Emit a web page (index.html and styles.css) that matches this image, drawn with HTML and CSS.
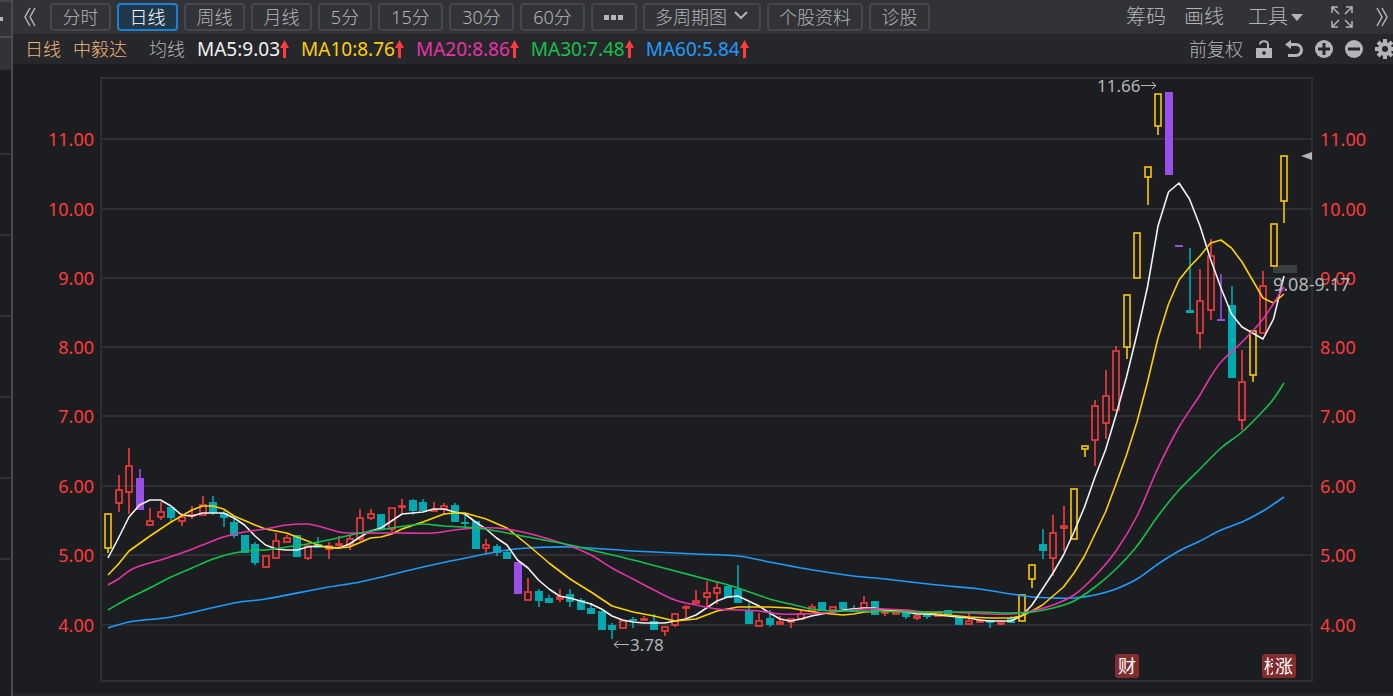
FILE: index.html
```html
<!DOCTYPE html>
<html lang="zh-CN">
<head>
    <meta charset="UTF-8">
    <meta name="viewport" content="width=device-width, initial-scale=1.0">
    <title>中毅达 日线</title>
    <link rel="stylesheet" href="styles.css">
</head>
<body>
    <aside class="side">
        <div class="side-head"><span class="side-dot"></span></div>
        <div class="side-sub"></div>
        <div class="side-row side-first"></div>
        <div class="side-row"></div>
        <div class="side-row"></div>
        <div class="side-row"></div>
        <div class="side-row"></div>
        <div class="side-row"></div>
    </aside>
    <main class="main">
        <nav class="toolbar">
            <button class="icon-btn" type="button" aria-label="向左">
                <svg width="14" height="20" viewBox="0 0 14 20"><path d="M7 1L2 10l5 9M12 1L7 10l5 9"/></svg>
            </button>
            <div class="tabs">
                <button class="tab" type="button">分时</button>
                <button class="tab active" type="button">日线</button>
                <button class="tab" type="button">周线</button>
                <button class="tab" type="button">月线</button>
                <button class="tab tab-short" type="button">5分</button>
                <button class="tab tab-long" type="button">15分</button>
                <button class="tab tab-long" type="button">30分</button>
                <button class="tab tab-long" type="button">60分</button>
                <button class="tab tab-more" type="button" aria-label="更多">
                    <svg width="20" height="5" viewBox="0 0 20 5"><path class="solid" d="M0 0h5v5H0zM7 0h5v5H7zM14 0h5v5h-5z"/></svg>
                </button>
                <button class="tab" type="button">多周期图
                    <svg class="chevron" width="14" height="8" viewBox="0 0 14 8"><path d="M1 1l6 6 6-6"/></svg>
                </button>
                <button class="tab" type="button">个股资料</button>
                <button class="tab" type="button">诊股</button>
            </div>
            <div class="tools">
                <button class="tool" type="button">筹码</button>
                <button class="tool" type="button">画线</button>
                <button class="tool tool-menu" type="button">工具<svg width="12" height="7" viewBox="0 0 12 7"><path class="solid" d="M0 0h12L6 7z"/></svg></button>
                <button class="icon-btn full" type="button" aria-label="全屏">
                    <svg width="22" height="22" viewBox="0 0 22 22"><path d="M1 7V1h6M1 1l7 7M15 1h6v6M21 1l-7 7M1 15v6h6M1 21l7-7M21 15v6h-6M21 21l-7-7"/></svg>
                </button>
                <button class="icon-btn next" type="button" aria-label="向右">
                    <svg width="14" height="20" viewBox="0 0 14 20"><path d="M2 1l5 9-5 9M7 1l5 9-5 9"/></svg>
                </button>
            </div>
        </nav>
        <div class="infobar">
            <span class="stock">日线</span>
            <span class="stock">中毅达</span>
            <span class="avg">均线</span>
            <div class="ma-list">
                <span class="ma ma5">MA5:9.03<svg width="9" height="18" viewBox="0 0 9 18"><path d="M4.500 0L9 8H6v10H3V8H0z"/></svg></span>
                <span class="ma ma10">MA10:8.76<svg width="9" height="18" viewBox="0 0 9 18"><path d="M4.500 0L9 8H6v10H3V8H0z"/></svg></span>
                <span class="ma ma20">MA20:8.86<svg width="9" height="18" viewBox="0 0 9 18"><path d="M4.500 0L9 8H6v10H3V8H0z"/></svg></span>
                <span class="ma ma30">MA30:7.48<svg width="9" height="18" viewBox="0 0 9 18"><path d="M4.500 0L9 8H6v10H3V8H0z"/></svg></span>
                <span class="ma ma60">MA60:5.84<svg width="9" height="18" viewBox="0 0 9 18"><path d="M4.500 0L9 8H6v10H3V8H0z"/></svg></span>
            </div>
            <div class="actions">
                <button class="adjust" type="button">前复权</button>
                <button class="icon-btn" type="button" aria-label="解锁">
                    <svg width="18" height="18" viewBox="0 0 18 18"><path d="M5 4.500C5 0 13 0 13 4.500V9"/><path class="solid" fill-rule="evenodd" d="M1 8h16v10H1zM9 11.200a1.800 1.800 0 1 0 .01 0z"/></svg>
                </button>
                <button class="icon-btn" type="button" aria-label="撤销">
                    <svg width="18" height="18" viewBox="0 0 18 18"><path class="bold" d="M4 4.500h7a5.500 5.500 0 0 1 0 11H3"/><path class="solid" d="M0 4.500L6 0v9z"/></svg>
                </button>
                <button class="icon-btn" type="button" aria-label="放大">
                    <svg width="18" height="18" viewBox="0 0 18 18"><circle class="solid" cx="9" cy="9" r="9"/><path class="cut" d="M9 3v12M3 9h12"/></svg>
                </button>
                <button class="icon-btn" type="button" aria-label="缩小">
                    <svg width="18" height="18" viewBox="0 0 18 18"><circle class="solid" cx="9" cy="9" r="9"/><path class="cut" d="M3 9h12"/></svg>
                </button>
                <button class="icon-btn" type="button" aria-label="设置">
                    <svg width="20" height="20" viewBox="0 0 20 20"><path class="teeth" d="M10 0v20M0 10h20M3 3l14 14M17 3L3 17"/><circle class="solid" cx="10" cy="10" r="7"/><circle class="hole" cx="10" cy="10" r="3"/></svg>
                </button>
            </div>
        </div>
        <svg class="chart" id="chart" viewBox="13 64 1380 629" role="img" aria-label="中毅达日线K线图"></svg>
        <div class="footer-line"></div>
    </main>
    <script src="chart.js"></script>
</body>
</html>
```
FILE: styles.css
```css
* {
    box-sizing: border-box;
}
body {
    margin: 0;
    display: flex;
    min-height: 100vh;
    background-color: #1c1d21;
    color: #b4b5b8;
    font-family: "Noto Sans", "Noto Sans CJK SC", sans-serif;
    font-size: 18px;
    overflow-x: hidden;
}
button {
    background: none;
    border: none;
    padding: 0;
    color: inherit;
    font-family: inherit;
    font-size: 18px;
    font-weight: 300;
    line-height: 24px;
    white-space: nowrap;
    cursor: pointer;
}
svg {
    flex: none;
}

/* left strip */
.side {
    flex: none;
    width: 13px;
    border-right: 2px solid #4b4c50;
}
.side-head {
    display: flex;
    align-items: center;
    height: 38px;
    background-color: #323337;
    border-top: 2px solid #45464a;
    border-bottom: 2px solid #4b4c50;
}
.side-dot {
    width: 3px;
    height: 4px;
    background-color: #b4b5b8;
}
.side-sub {
    height: 32px;
    background-color: #323337;
}
.side-row {
    height: 81px;
    margin-right: 1px;
    border-bottom: 2px solid #323337;
}
.side-first {
    height: 85px;
}

.main {
    flex: 1;
    min-width: 0;
}

/* toolbar */
.toolbar {
    display: flex;
    align-items: center;
    height: 34px;
    padding-left: 10px;
    background-color: #323337;
}
.icon-btn {
    display: flex;
    align-items: center;
}
.icon-btn path,
.chevron path {
    fill: none;
    stroke: #b4b5b8;
    stroke-width: 2;
}
.toolbar .icon-btn path {
    stroke-width: 1.5;
}
svg .solid,
.icon-btn path.solid {
    fill: #b4b5b8;
    stroke: none;
}
.tabs {
    display: flex;
    gap: 6px;
    margin-left: 13px;
}
.tab {
    display: flex;
    align-items: center;
    justify-content: center;
    min-width: 61px;
    height: 28px;
    padding: 0 10px;
    border: 2px solid #46474b;
    border-radius: 4px;
}
.tab.active {
    background-color: #20384c;
    border-color: #1c82cf;
    color: #fff;
}
.tab-short {
    min-width: 54px;
}
.tab-long {
    min-width: 65px;
}
.tab-more {
    min-width: 46px;
}
.chevron {
    margin: 0 1px 4px 7px;
}
.tools {
    display: flex;
    align-items: center;
    gap: 18px;
    margin-left: auto;
    padding-right: 4px;
}
.tool {
    font-size: 20px;
}
.tool-menu {
    display: flex;
    align-items: center;
    gap: 3px;
    margin-left: 6px;
}
.full {
    margin-left: 10px;
}
.next {
    margin-left: 4px;
}

/* info bar */
.infobar {
    display: flex;
    align-items: center;
    height: 30px;
    padding-left: 12px;
    background-color: #26272b;
    line-height: 24px;
    white-space: nowrap;
}
.stock {
    margin-right: 12px;
    color: #f0b878;
    font-weight: 300;
}
.avg {
    margin-left: 10px;
    font-weight: 300;
}
.ma-list {
    display: flex;
    gap: 12px;
    margin-left: 12px;
    font-size: 19px;
}
.ma {
    display: flex;
    align-items: center;
}
.ma path {
    fill: #ff3b3b;
}
.ma5 {
    color: #f2f2f2;
}
.ma10 {
    color: #ffd000;
}
.ma20 {
    color: #e733a8;
}
.ma30 {
    color: #12c24c;
}
.ma60 {
    color: #1e9bff;
}
.actions {
    display: flex;
    align-items: center;
    gap: 12px;
    margin-left: auto;
    margin-right: -2px;
}
.icon-btn path.bold {
    stroke-width: 3;
}
.icon-btn path.cut {
    stroke: #26272b;
    stroke-width: 3;
}
.icon-btn path.teeth {
    stroke-width: 4;
}
.hole {
    fill: #26272b;
}

/* chart */
.chart {
    display: block;
    width: 100%;
    height: auto;
}
.footer-line {
    height: 3px;
    background-color: #26272b;
}
.grid {
    fill: none;
    stroke: #2e2f33;
    stroke-width: 2;
    shape-rendering: crispEdges;
}
.axis {
    fill: #ff3b3b;
    font-size: 18px;
}
.axis-left {
    text-anchor: end;
}
.candle {
    stroke-width: 1.6;
}
.up {
    fill: none;
    stroke: #fa3c3c;
}
.limit {
    fill: none;
    stroke: #fbc800;
}
.down {
    fill: #00a8b0;
    stroke: #00a8b0;
}
.drop {
    fill: #9b4fe8;
    stroke: #9b4fe8;
}
.full-body {
    stroke: none;
}
.line {
    fill: none;
    stroke: currentColor;
    stroke-width: 1.6;
    stroke-linejoin: round;
}
.note {
    fill: #b4b5b8;
    font-size: 17px;
}
.range {
    fill: #b4b5b8;
    font-size: 18px;
}
.arrow {
    fill: none;
    stroke: #b4b5b8;
}
.gap {
    fill: #3d3e43;
}
.badge {
    fill: #842b2d;
}
.badge-text {
    fill: #fff;
    font-size: 18px;
}
```
FILE: chart.js
```js
const chart = document.getElementById('chart');
const START = 108;
const STEP = 10.5;

// type, high, body top, body bottom, low
const candles = [
    ['limit', 513, 513, 548, 553], ['up', 475, 489, 503, 512], ['up', 448, 465, 492, 514], ['drop', 469, 478, 510, 510],
    ['up', 508, 520, 525, 525], ['up', 502, 511, 517, 520], ['down', 507, 507, 518, 521], ['up', 513, 516, 521, 526],
    ['up', 506, 514, 516, 519], ['up', 496, 504, 515, 515], ['down', 496, 502, 513, 515], ['down', 511, 513, 518, 527],
    ['down', 518, 522, 536, 538], ['down', 535, 535, 553, 553], ['down', 542, 544, 563, 565], ['up', 555, 555, 567, 567],
    ['up', 533, 540, 558, 558], ['up', 535, 537, 542, 542], ['down', 535, 535, 557, 557], ['up', 545, 545, 558, 560],
    ['down', 537, 544, 548, 548], ['up', 542, 545, 549, 559], ['up', 536, 543, 545, 547], ['up', 536, 538, 545, 550],
    ['up', 509, 517, 539, 541], ['up', 509, 513, 518, 520], ['down', 514, 514, 530, 530], ['up', 507, 507, 529, 532],
    ['up', 499, 505, 506, 514], ['down', 499, 500, 511, 515], ['down', 499, 502, 511, 511], ['up', 502, 509, 510, 510],
    ['up', 503, 505, 509, 514], ['down', 503, 505, 522, 522], ['down', 514, 522, 523, 527], ['down', 521, 521, 549, 549],
    ['up', 539, 544, 548, 554], ['down', 544, 546, 553, 556], ['down', 550, 552, 559, 559], ['drop', 562, 562, 594, 594],
    ['up', 578, 591, 600, 600], ['down', 589, 591, 601, 607], ['down', 595, 598, 603, 603], ['up', 589, 596, 599, 602],
    ['down', 589, 594, 602, 607], ['down', 598, 600, 610, 610], ['down', 603, 608, 614, 614], ['down', 611, 611, 630, 630],
    ['down', 623, 625, 630, 639], ['up', 620, 620, 628, 628], ['down', 617, 619, 620, 628], ['up', 616, 618, 620, 620],
    ['down', 614, 621, 630, 630], ['up', 626, 626, 631, 636], ['up', 613, 613, 625, 627], ['up', 605, 606, 608, 619],
    ['up', 590, 600, 603, 603], ['up', 581, 592, 597, 608], ['up', 582, 587, 593, 604], ['down', 586, 586, 598, 598],
    ['down', 565, 589, 603, 603], ['down', 603, 611, 624, 624], ['up', 613, 620, 626, 626], ['down', 610, 618, 625, 627],
    ['up', 616, 621, 624, 624], ['up', 618, 618, 622, 628], ['up', 609, 613, 619, 619], ['up', 604, 606, 611, 611],
    ['down', 602, 602, 611, 611], ['up', 606, 606, 610, 610], ['down', 602, 602, 609, 609], ['down', 605, 608, 612, 612],
    ['up', 596, 602, 608, 608], ['down', 601, 601, 615, 615], ['up', 611, 611, 612, 616], ['up', 611, 611, 614, 614],
    ['down', 612, 612, 617, 619], ['up', 615, 615, 618, 620], ['down', 614, 614, 617, 619], ['up', 611, 611, 616, 616],
    ['down', 610, 610, 616, 616], ['down', 616, 616, 625, 625], ['up', 613, 620, 624, 624], ['up', 619, 620, 621, 621],
    ['down', 620, 620, 623, 628], ['up', 621, 622, 623, 625], ['down', 616, 618, 623, 623], ['limit', 594, 594, 621, 621],
    ['limit', 564, 564, 579, 588], ['down', 529, 544, 551, 559], ['up', 515, 532, 558, 576], ['up', 506, 525, 528, 551],
    ['limit', 488, 488, 539, 539], ['limit', 445, 445, 449, 457], ['up', 400, 405, 440, 466], ['up', 370, 395, 423, 439],
    ['up', 346, 350, 410, 410], ['limit', 294, 294, 347, 359], ['limit', 232, 232, 278, 278], ['limit', 166, 166, 177, 205],
    ['limit', 93, 93, 126, 135], ['drop', 92, 92, 175, 175], ['drop', 245, 245, 247, 247], ['down', 248, 310, 313, 313],
    ['up', 269, 300, 333, 349], ['up', 239, 255, 310, 320], ['drop', 274, 319, 321, 321], ['down', 286, 305, 378, 378],
    ['up', 350, 381, 420, 430], ['limit', 330, 330, 375, 382], ['up', 271, 285, 333, 333], ['limit', 223, 223, 266, 266],
    ['limit', 155, 155, 201, 223]
];

// [candle index, y]
const ma5 = [558, 538, 517, 505, 500, 500, 506, 515, 516, 513, 513, 513, 518, 525, 536, 545, 549, 550, 550, 547,
    546, 547, 548, 544, 537, 531, 528, 521, 514, 513, 512, 509, 509, 512, 514, 522, 529, 538, 545, 560,
    568, 580, 589, 596, 598, 601, 604, 609, 616, 620, 622, 623, 623, 623, 621, 619, 615, 608, 601, 597,
    596, 601, 606, 613, 619, 621, 619, 616, 614, 612, 610, 609, 608, 608, 610, 611, 612, 614, 614, 615,
    616, 617, 618, 620, 621, 621, 621, 616, 605, 589, 573, 555, 532, 507, 477, 450, 415, 377, 334, 287,
    226, 192, 183, 199, 226, 259, 288, 314, 327, 333, 339, 319, 276].map((y, i) => [i, y]);
const ma10 = [[0, 575], [1, 564], [2, 551], [4, 536], [6, 522], [8, 510], [9, 506], [10, 506], [11, 509], [12, 516],
    [14, 525], [15, 529], [17, 533], [19, 541], [20, 545], [21, 548], [22, 548], [23, 547], [25, 538], [26, 537],
    [27, 534], [28, 529], [30, 522], [32, 514], [33, 513], [34, 513], [35, 516], [36, 519], [38, 528], [40, 545],
    [42, 563], [44, 579], [46, 592], [48, 606], [50, 612], [52, 616], [54, 621], [56, 619], [58, 611], [60, 607],
    [63, 607], [65, 608], [66, 610], [68, 613], [70, 615], [71, 614], [72, 612], [74, 611], [76, 611], [78, 613],
    [80, 615], [82, 617], [84, 618], [86, 618], [87, 616], [88, 611], [89, 605], [90, 596], [91, 587], [92, 573],
    [93, 556], [94, 534], [95, 512], [96, 484], [97, 455], [98, 422], [99, 382], [100, 338], [101, 304], [102, 280],
    [103, 267], [104, 256], [105, 243], [106, 240], [107, 248], [108, 262], [109, 280], [110, 298], [111, 303], [112, 294]];
const ma20 = [[0, 585], [1, 579], [2, 571], [3, 566], [5, 560], [7, 553], [9, 545], [11, 537], [13, 532], [15, 529],
    [17, 525], [19, 524], [20, 526], [21, 529], [22, 532], [23, 533], [28, 533], [31, 533], [33, 530], [35, 528],
    [37, 528], [39, 531], [41, 536], [44, 546], [46, 555], [48, 568], [50, 579], [52, 590], [54, 600], [56, 605],
    [58, 609], [60, 610], [62, 611], [64, 614], [66, 614], [68, 613], [70, 611], [72, 609], [74, 609], [76, 610],
    [78, 612], [80, 612], [84, 614], [86, 614], [88, 611], [90, 605], [92, 595], [94, 576], [96, 551], [98, 516],
    [100, 468], [102, 427], [104, 395], [105, 377], [106, 362], [108, 342], [110, 319], [112, 287]];
const ma30 = [[0, 610], [2, 598], [4, 588], [6, 577], [8, 568], [10, 559], [12, 553], [14, 550], [15, 550], [17, 547],
    [19, 544], [21, 540], [24, 533], [27, 528], [29, 525], [30, 524], [32, 526], [35, 528], [37, 531], [40, 537],
    [42, 541], [44, 545], [46, 550], [50, 560], [54, 571], [58, 582], [60, 588], [63, 599], [65, 604], [67, 609],
    [69, 611], [72, 611], [76, 612], [80, 612], [83, 612], [86, 613], [88, 612], [90, 608], [92, 601], [94, 587],
    [96, 569], [98, 546], [100, 516], [102, 490], [104, 469], [106, 448], [108, 432], [110, 411], [111, 399], [112, 383]];
const ma60 = [[0, 628], [2, 622], [6, 617], [12, 603], [15, 599], [21, 587], [24, 582], [30, 567], [35, 556], [38, 550],
    [40, 548], [44, 547], [50, 551], [56, 554], [60, 556], [63, 562], [66, 568], [71, 576], [74, 579], [79, 585],
    [83, 589], [86, 594], [88, 597], [90, 598], [92, 598], [94, 595], [96, 589], [98, 579], [100, 564], [102, 551],
    [104, 541], [106, 530], [108, 522], [110, 511], [112, 497]];

const levels = [['11.00', 139], ['10.00', 209], ['9.00', 278], ['8.00', 347], ['7.00', 416], ['6.00', 486], ['5.00', 555], ['4.00', 625]];

function getX(i) {
    return START + i * STEP;
}

function drawCandle(candle, i) {
    const [type, high, top, bottom, low] = candle;
    const x = Math.round(getX(i));
    let wick = '';
    let body = '';
    if (high < top) wick += `M${x} ${high}V${top}`;
    if (low > bottom) wick += `M${x} ${bottom}V${low}`;
    if (type === 'down' || type === 'drop') {
        body = `<rect class="full-body" x="${x - 4}" y="${top}" width="8" height="${Math.max(bottom - top, 2)}"/>`;
    } else {
        body = `<rect x="${x - 3}" y="${top + 1}" width="6" height="${Math.max(bottom - top - 1, 1)}"/>`;
    }
    return `<g class="candle ${type}"><path d="${wick}"/>${body}</g>`;
}

// one point per candle, straight segments
function drawPolyline(points, name) {
    return `<polyline class="line ${name}" points="${points.map(([i, y]) => getX(i) + ',' + y).join(' ')}"/>`;
}

// smooth curve through the points
function drawCurve(points, name) {
    const p = points.map(([i, y]) => [getX(i), y]);
    let d = `M${p[0][0]} ${p[0][1]}`;
    for (let i = 0; i < p.length - 1; i++) {
        const a = p[i - 1] || p[i];
        const b = p[i];
        const c = p[i + 1];
        const e = p[i + 2] || c;
        const dx = (c[0] - b[0]) / 3;
        const s1 = (c[1] - a[1]) / (c[0] - a[0]);
        const s2 = (e[1] - b[1]) / (e[0] - b[0]);
        d += `C${b[0] + dx} ${b[1] + s1 * dx} ${c[0] - dx} ${c[1] - s2 * dx} ${c[0]} ${c[1]}`;
    }
    return `<path class="line ${name}" d="${d}"/>`;
}

let html = '<path class="grid" d="M101 78H1312V681H101Z"/>';
levels.forEach(([text, y]) => {
    html += `<path class="grid" d="M101 ${y}H1312"/>`;
    html += `<text class="axis axis-left" x="94" y="${y + 7}">${text}</text>`;
    html += `<text class="axis" x="1320" y="${y + 7}">${text}</text>`;
});
html += '<rect class="gap" x="1273" y="265" width="24" height="8"/>';
html += candles.map(drawCandle).join('');
html += drawCurve(ma60, 'ma60');
html += drawPolyline(ma5, 'ma5');
html += drawPolyline(ma10, 'ma10');
html += drawCurve(ma20, 'ma20');
html += drawCurve(ma30, 'ma30');

// high, low and gap notes
html += `
    <text class="note" x="1097" y="92">11.66</text>
    <path class="arrow" d="M1141 85.500h15M1152 82l4 3.500-4 3.500"/>
    <text class="note" x="630" y="651">3.78</text>
    <path class="arrow" d="M629 644.500h-15M618 641l-4 3.500 4 3.500"/>
    <text class="range" x="1273" y="291">9.08-9.17</text>
    <path class="solid" d="M1301 156l11-4v8z"/>`;

// event badges
html += `
    <rect class="badge" x="1115" y="654" width="24" height="24" rx="3"/>
    <text class="badge-text" x="1118" y="673">财</text>
    <rect class="badge" x="1262" y="654" width="34" height="24" rx="3"/>
    <text class="badge-text" x="1264" y="673">榜</text>
    <rect class="badge" x="1273" y="655" width="20" height="22"/>
    <text class="badge-text" x="1275" y="673">涨</text>`;

chart.innerHTML = html;
```
